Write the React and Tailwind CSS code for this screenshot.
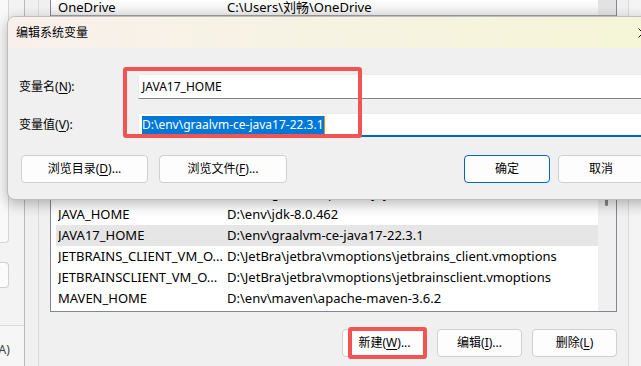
const rows = [
  { name: "GRADLE_USER_HOME", value: "D:\\env\\gradle\\repository_jar" },
  { name: "JAVA_HOME", value: "D:\\env\\jdk-8.0.462" },
  { name: "JAVA17_HOME", value: "D:\\env\\graalvm-ce-java17-22.3.1", selected: true },
  {
    name: "JETBRAINS_CLIENT_VM_O...",
    value: "D:\\JetBra\\jetbra\\vmoptions\\jetbrains_client.vmoptions",
  },
  {
    name: "JETBRAINSCLIENT_VM_O...",
    value: "D:\\JetBra\\jetbra\\vmoptions\\jetbrainsclient.vmoptions",
  },
  { name: "MAVEN_HOME", value: "D:\\env\\maven\\apache-maven-3.6.2" },
];

function Key({ k }) {
  return (
    <>
      (<span className="underline underline-offset-2">{k}</span>)
    </>
  );
}

function WinButton({ children, primary, className = "" }) {
  return (
    <div
      className={`flex h-[28px] items-center justify-center rounded-[4px] bg-[#fdfdfd] ${
        primary ? "border border-[#0067c0]" : "border border-[#d0d0d0]"
      } ${className}`}
    >
      {children}
    </div>
  );
}

function Background() {
  return (
    <div className="flex h-full">
      {/* window partly hidden on the left */}
      <div className="flex w-[25px] shrink-0 flex-col border-r border-[#b9b9b9] bg-[#f3f3f3]">
        <div className="h-[243px] w-[9px] rounded-br-[4px] border-r border-b border-[#d6d6d6] bg-[#f9f9f9]" />
        <div className="mt-[19px] h-[26px] w-[9px] rounded-r-[4px] border-y border-r border-[#d0d0d0] bg-[#fbfbfb]" />
        <div className="mt-[37px] h-[1px] bg-[#dcdcdc]" />
        <div className="flex flex-1 items-center overflow-hidden bg-[#f6f6f6] pt-[8px]">
          <span className="-ml-[5px] whitespace-nowrap text-[#444]">(A)</span>
        </div>
      </div>

      {/* environment variables window */}
      <div className="flex-1 pl-[13px]">
        <div className="flex h-full w-[591px] flex-col border-x border-[#d9d9d9] px-[11px]">
          <div className="flex h-[312px] border-x border-b border-[#828790] bg-white text-[13px]">
            <div className="flex flex-1 flex-col">
              <div className="flex h-[16px] items-start border-b border-[#a0a0a0] bg-gradient-to-b from-[#ffffff] to-[#ebebeb] pl-[7px] leading-[14px]">
                <span className="w-[169px]">OneDrive</span>
                <span>C:\Users\刘畅\OneDrive</span>
              </div>
              <div className="h-[167px]" />
              <div className="pl-[5px]">
                {rows.map((r) => (
                  <div
                    key={r.name}
                    className={`flex h-[21px] items-center whitespace-nowrap pl-[2px] ${
                      r.selected ? "bg-[#e6e6e6]" : ""
                    }`}
                  >
                    <span className="w-[169px] overflow-hidden">{r.name}</span>
                    <span>{r.value}</span>
                  </div>
                ))}
              </div>
            </div>
            <div className="flex w-[18px] flex-col bg-[#f0f0f0]">
              <div className="h-[16px] border-b border-[#a0a0a0] bg-[#e2e2e2]" />
              <div className="ml-[7px] mt-[4px] h-[186px] w-[3px] rounded-full bg-[#858585]" />
            </div>
          </div>
          <div className="mt-[17px] flex justify-end gap-[10px]">
            <WinButton className="w-[85px]">
              新建<Key k="W" />...
            </WinButton>
            <WinButton className="w-[85px]">
              编辑<Key k="I" />...
            </WinButton>
            <WinButton className="w-[85px]">
              删除<Key k="L" />
            </WinButton>
          </div>
        </div>
      </div>
      <div className="w-[12px] shrink-0 bg-[#f4f4f4]" />
    </div>
  );
}

function EditDialog() {
  return (
    <div className="absolute left-[7px] top-[16px] w-[649px] overflow-hidden rounded-[8px] border border-[#bdbdbd] bg-[#f0f0f0] shadow-[0_4px_14px_rgba(0,0,0,0.28)]">
      <div className="flex h-[31px] items-center bg-gradient-to-r from-[#f9f0ec] via-[#f6f3e2] to-[#f5f5d6] pl-[8px] pr-[7px]">
        <span>编辑系统变量</span>
        <svg className="ml-auto" width="10" height="10" viewBox="0 0 10 10">
          <path d="M0.5 0.5L9.5 9.5M9.5 0.5L0.5 9.5" stroke="#111" strokeWidth="1" />
        </svg>
      </div>
      <div className="flex flex-col pl-[11px] pr-[11px] pb-[16px] pt-[26px]">
        <div className="flex h-[25px] items-center">
          <span className="w-[119px]">
            变量名<Key k="N" />:
          </span>
          <div className="flex h-full flex-1 items-center border border-[#ececec] border-b-[#868686] bg-white pl-[3px]">
            JAVA17_HOME
          </div>
        </div>
        <div className="mt-[14px] flex h-[24px] items-center">
          <span className="w-[119px]">
            变量值<Key k="V" />:
          </span>
          <div className="flex h-full flex-1 items-center border border-[#ececec] border-b-2 border-b-[#0067c0] bg-white pl-[3px]">
            <span className="border-r border-[#ff8c00] bg-[#0078d7] leading-[18px] text-white">
              D:\env\graalvm-ce-java17-22.3.1
            </span>
          </div>
        </div>
        <div className="mt-[18px] flex">
          <WinButton className="ml-[2px] w-[127px]">
            浏览目录<Key k="D" />...
          </WinButton>
          <WinButton className="ml-[11px] w-[128px]">
            浏览文件<Key k="F" />...
          </WinButton>
          <WinButton primary className="ml-auto w-[86px]">
            确定
          </WinButton>
          <WinButton className="ml-[8px] w-[86px]">取消</WinButton>
        </div>
      </div>
    </div>
  );
}

export default function App() {
  return (
    <div className="relative h-[366px] w-[641px] overflow-hidden bg-[#f0f0f0] font-['Noto_Sans','Noto_Sans_CJK_SC',sans-serif] text-[12px] text-black">
      <Background />
      <EditDialog />
      {/* annotation boxes */}
      <div className="absolute left-[123px] top-[67px] h-[71px] w-[239px] rounded-[3px] border-4 border-[#f25454]" />
      <div className="absolute left-[348px] top-[327px] h-[32px] w-[79px] rounded-[3px] border-4 border-[#f25454]" />
    </div>
  );
}
